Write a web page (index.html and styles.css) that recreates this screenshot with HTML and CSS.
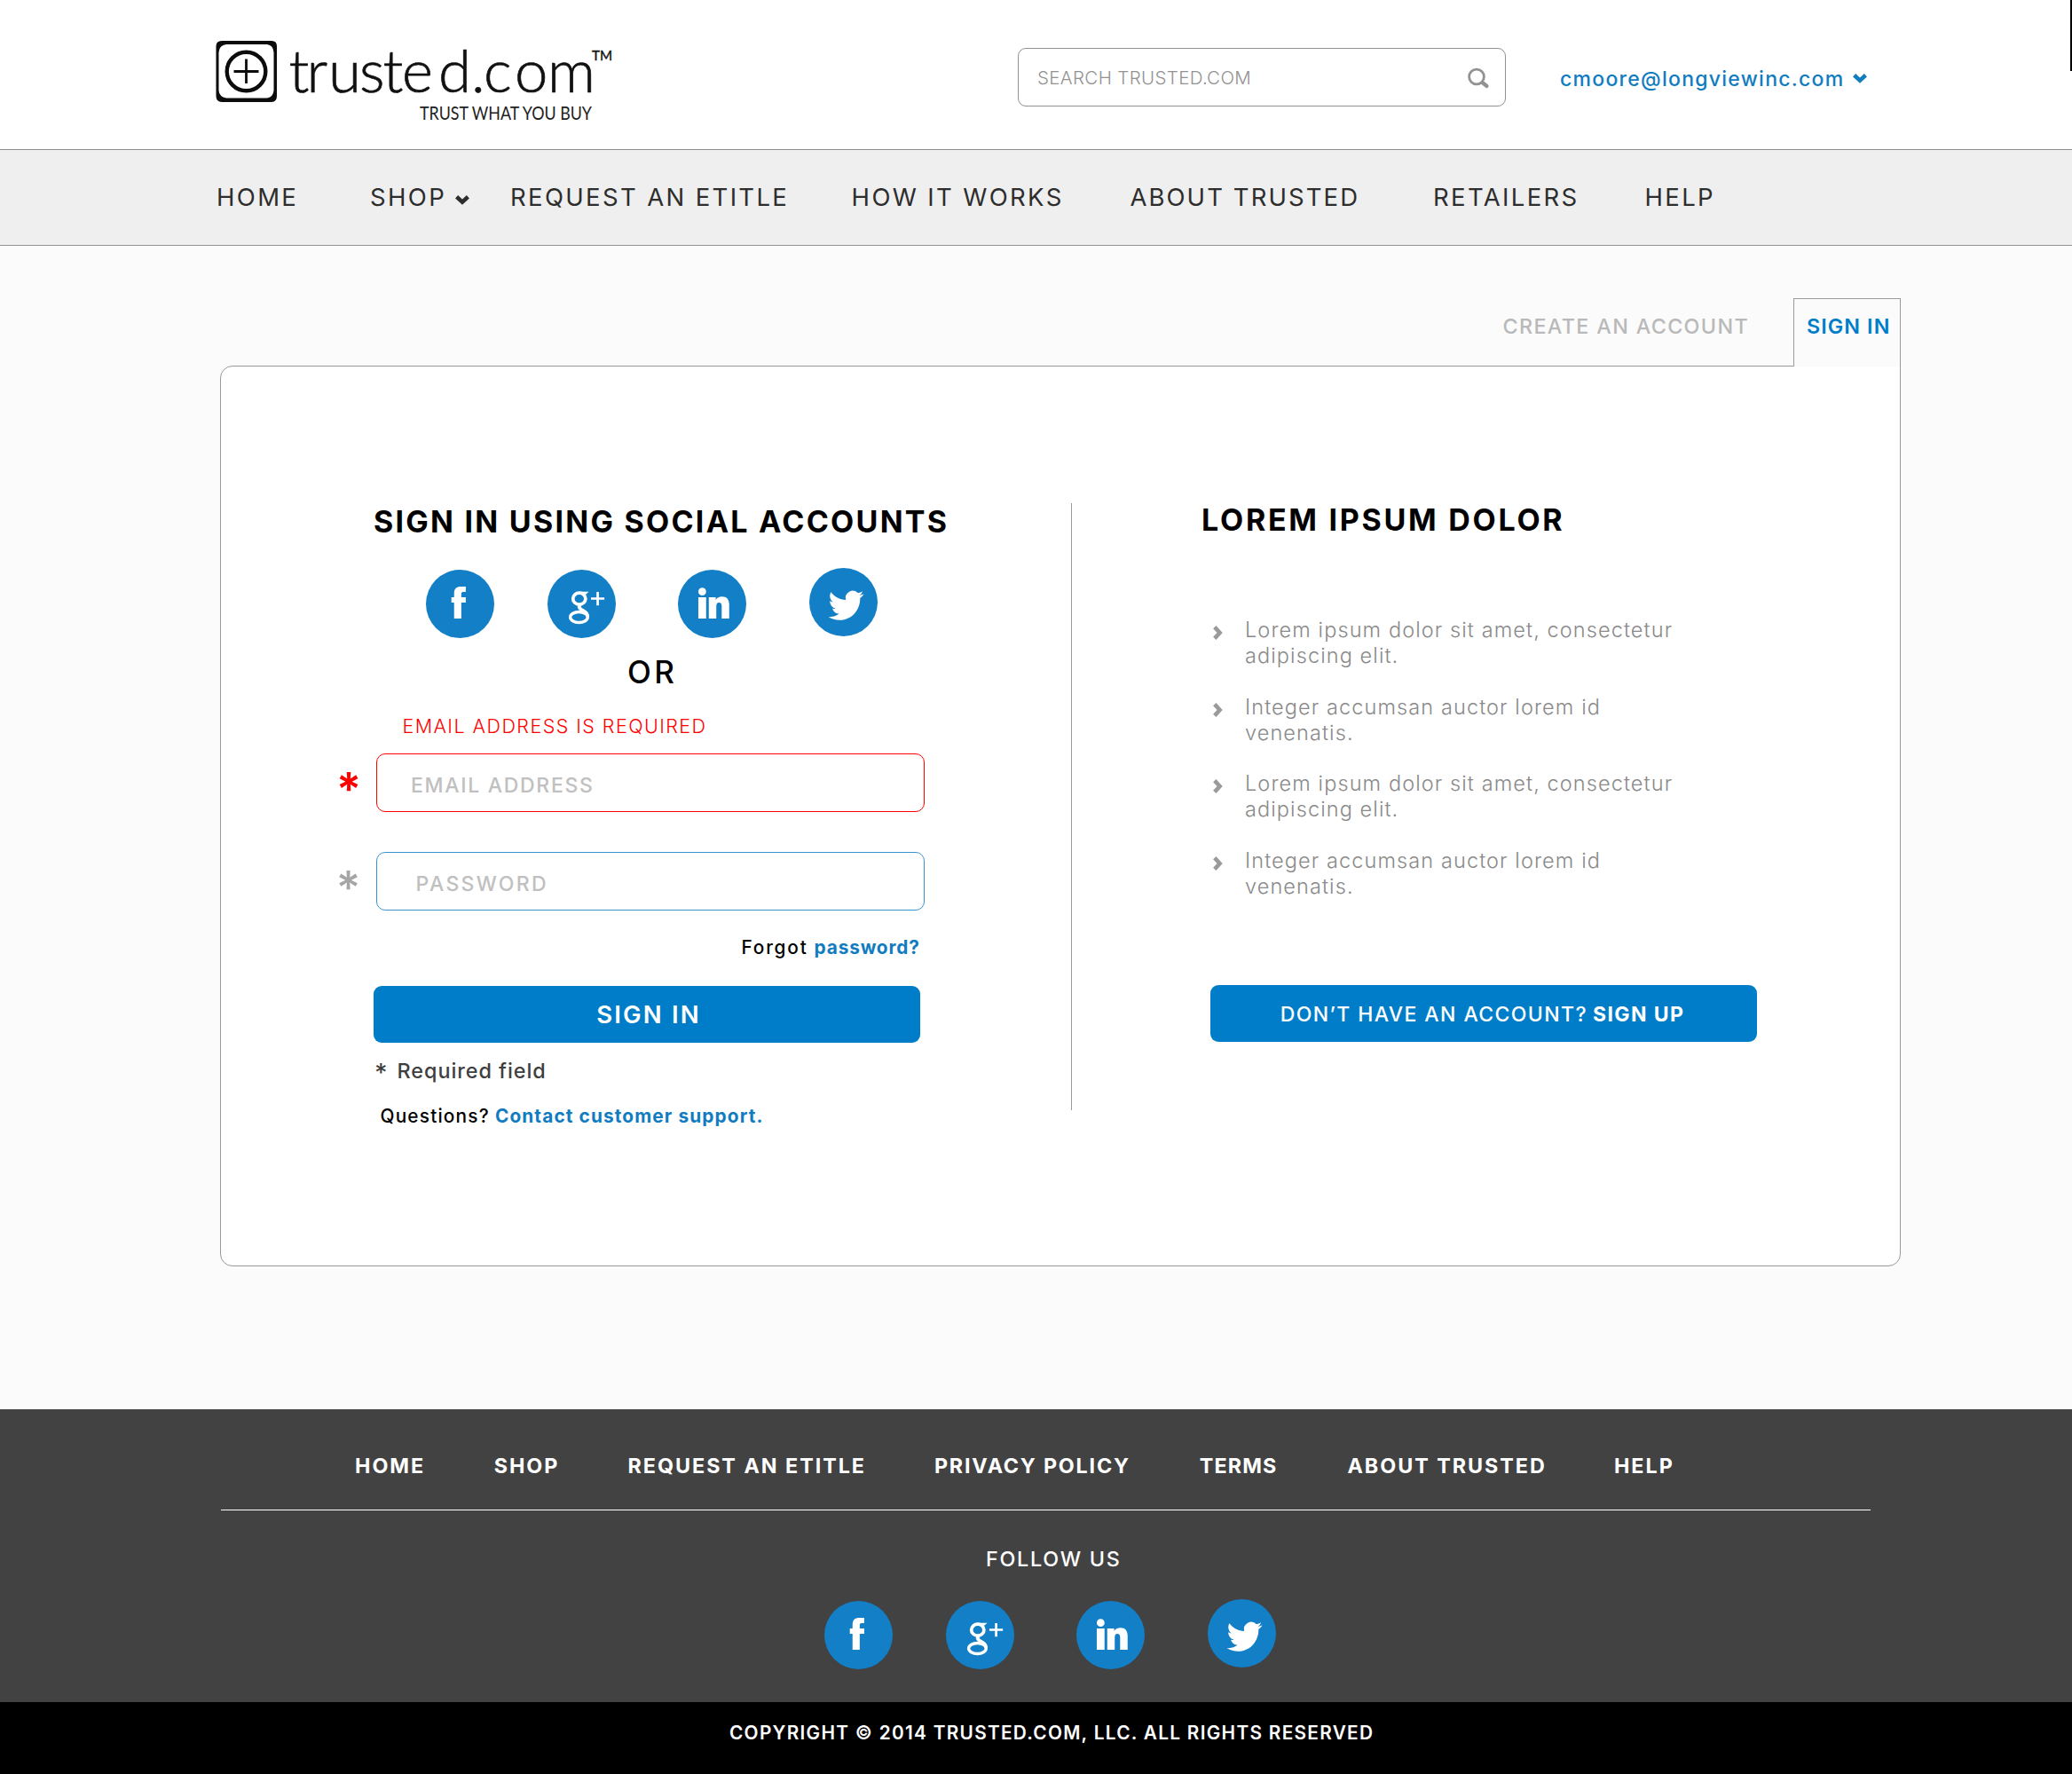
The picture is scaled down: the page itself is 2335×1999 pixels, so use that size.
FILE: index.html
```html
<!DOCTYPE html>
<html lang="en">
<head>
<meta charset="utf-8">
<title>Trusted.com – Sign in</title>
<link rel="stylesheet" href="styles.css">
</head>
<body>
<svg class="sprite" aria-hidden="true">
  <symbol id="facebook" viewBox="0 0 228 231" preserveAspectRatio="none">
    <path fill="#fff" d="M94 165V111H85V93H94V81C94 64 102 57 117 57H133V75H124C119 75 118 78 118 82V93H133V111H118V165Z"/>
  </symbol>
  <symbol id="google" viewBox="0 0 228 231" preserveAspectRatio="none">
    <g fill="none" stroke="#fff">
      <ellipse cx="106" cy="98" rx="21" ry="19.500" stroke-width="11"/>
      <path stroke-width="11" d="M111 118C98 126 110 133 121 139C130 144 134 151 134 160"/>
      <ellipse cx="105" cy="160.500" rx="29" ry="18" stroke-width="10"/>
      <path stroke-width="8" d="M145 97.500H190M167.500 75V121"/>
    </g>
    <path fill="#fff" d="M104 74H138L128 83H112Z"/>
  </symbol>
  <symbol id="linkedin" viewBox="0 0 228 231" preserveAspectRatio="none">
    <g fill="#fff">
      <circle cx="81" cy="74" r="13"/>
      <rect x="68" y="93" width="26" height="72"/>
      <path d="M103 93H126V102C130 95 138 91 147 91C163 91 171 101 171 118V165H146V124C146 115 143 111 137 111C131 111 128 115 128 124V165H103Z"/>
    </g>
  </symbol>
  <symbol id="twitter" viewBox="0 0 228 231" preserveAspectRatio="none">
    <path fill="#fff" transform="translate(64 65.500) scale(4.900 5.100)" d="M23.953 4.570a10 10 0 01-2.825.775 4.958 4.958 0 002.163-2.723c-.951.555-2.005.959-3.127 1.184a4.920 4.920 0 00-8.384 4.482C7.690 8.095 4.067 6.130 1.640 3.162a4.822 4.822 0 00-.666 2.475c0 1.710.870 3.213 2.188 4.096a4.904 4.904 0 01-2.228-.616v.060a4.923 4.923 0 003.946 4.827 4.996 4.996 0 01-2.212.085 4.936 4.936 0 004.604 3.417 9.867 9.867 0 01-6.102 2.105c-.390 0-.779-.023-1.170-.067a13.995 13.995 0 007.557 2.209c9.053 0 13.998-7.496 13.998-13.985 0-.210 0-.420-.015-.630A9.935 9.935 0 0024 4.590z"/>
  </symbol>
  <symbol id="chevron-down" viewBox="0 0 16 11">
    <path fill="none" stroke="currentColor" stroke-width="4.600" d="M1.600 1.800L8 7.600L14.400 1.800"/>
  </symbol>
  <symbol id="chevron-right" viewBox="0 0 11 16">
    <path fill="none" stroke="currentColor" stroke-width="4.600" d="M1.800 1.600L7.600 8L1.800 14.400"/>
  </symbol>
</svg>

<header class="header">
  <svg class="logo" viewBox="240 32 455 110">
    <path fill="#0c0c0c" fill-rule="evenodd" d="M250 46h56q6 0 6 6v56q0 7-6 7h-56q-6.500 0-6.500-7v-56q0-6 6.500-6zM255 50q-8 1-8.500 9v43q.500 7 8.500 8.500h46q7-1.500 7.500-8.500v-43q-.500-8-7.500-9z"/>
    <circle cx="277.500" cy="80.500" r="21.800" fill="none" stroke="#0c0c0c" stroke-width="4.400"/>
    <path stroke="#0c0c0c" stroke-width="2.800" d="M263.500 80.500H291.500M277.500 66.500V94"/>
    <text class="wordmark" y="104" x="325.500 345.500 370 405 431.500 453 494 531 545 580 617">trusted.com</text>
    <text class="trademark" x="667" y="68" textLength="23" lengthAdjust="spacingAndGlyphs">TM</text>
    <text class="tagline" x="473" y="134.500" textLength="194" lengthAdjust="spacingAndGlyphs">TRUST WHAT YOU BUY</text>
  </svg>
  <div class="search">
    <span>SEARCH TRUSTED.COM</span>
    <svg width="26" height="24" viewBox="0 0 26 24"><circle cx="11" cy="10.500" r="8.400" fill="none" stroke="#929292" stroke-width="2.800"/><path d="M17.500 17L22.500 21" stroke="#929292" stroke-width="4.200" stroke-linecap="round"/></svg>
  </div>
  <a class="account">cmoore@longviewinc.com<svg width="16" height="11"><use href="#chevron-down"/></svg></a>
  <span class="edge"></span>
</header>

<nav class="nav">
  <a>HOME</a>
  <a>SHOP<svg width="16" height="11"><use href="#chevron-down"/></svg></a>
  <a>REQUEST AN ETITLE</a>
  <a>HOW IT WORKS</a>
  <a class="about">ABOUT TRUSTED</a>
  <a>RETAILERS</a>
  <a>HELP</a>
</nav>

<main class="main">
  <div class="tabs">
    <a class="tab">CREATE AN ACCOUNT</a>
    <a class="tab tab-active">SIGN IN</a>
  </div>
  <section class="panel">
    <form class="signin">
      <h2 class="signin-title">SIGN IN USING SOCIAL ACCOUNTS</h2>
      <div class="social">
        <a><svg><use href="#facebook"/></svg></a>
        <a><svg><use href="#google"/></svg></a>
        <a><svg><use href="#linkedin"/></svg></a>
        <a><svg><use href="#twitter"/></svg></a>
      </div>
      <p class="or">OR</p>
      <p class="error">EMAIL ADDRESS IS REQUIRED</p>
      <div class="field field-error"><span class="star">*</span><div class="input">EMAIL ADDRESS</div></div>
      <div class="field field-password"><span class="star">*</span><div class="input">PASSWORD</div></div>
      <p class="forgot"><span>Forgot</span><a>password?</a></p>
      <a class="button button-signin">SIGN IN</a>
      <p class="required"><span class="star">*</span>Required field</p>
      <p class="questions"><span>Questions?</span><a>Contact customer support.</a></p>
    </form>
    <div class="divider"></div>
    <div class="signup">
      <h2 class="signup-title">LOREM IPSUM DOLOR</h2>
      <ul class="benefits">
        <li><svg width="11" height="16"><use href="#chevron-right"/></svg><span>Lorem ipsum dolor sit amet, consectetur adipiscing elit.</span></li>
        <li><svg width="11" height="16"><use href="#chevron-right"/></svg><span>Integer accumsan auctor lorem id venenatis.</span></li>
        <li><svg width="11" height="16"><use href="#chevron-right"/></svg><span>Lorem ipsum dolor sit amet, consectetur adipiscing elit.</span></li>
        <li><svg width="11" height="16"><use href="#chevron-right"/></svg><span>Integer accumsan auctor lorem id venenatis.</span></li>
      </ul>
      <a class="button button-signup"><span>DON’T HAVE AN ACCOUNT?</span><b>SIGN UP</b></a>
    </div>
  </section>
</main>

<footer class="footer">
  <nav class="footer-nav">
    <a>HOME</a>
    <a>SHOP</a>
    <a>REQUEST AN ETITLE</a>
    <a class="privacy">PRIVACY POLICY</a>
    <a class="terms">TERMS</a>
    <a>ABOUT TRUSTED</a>
    <a>HELP</a>
  </nav>
  <div class="rule"></div>
  <p class="follow">FOLLOW US</p>
  <div class="social">
    <a><svg><use href="#facebook"/></svg></a>
    <a><svg><use href="#google"/></svg></a>
    <a><svg><use href="#linkedin"/></svg></a>
    <a><svg><use href="#twitter"/></svg></a>
  </div>
</footer>
<p class="copyright">COPYRIGHT © 2014 TRUSTED.COM, LLC. ALL RIGHTS RESERVED</p>
</body>
</html>
```
FILE: styles.css
```css
* { box-sizing: border-box; }
body { margin: 0; background: #fbfbfb; font-family: Inter, "Liberation Sans", sans-serif; color: #000; white-space: nowrap; }
h2, p, ul { margin: 0; padding: 0; }
svg { display: block; flex: none; }
.sprite { position: absolute; width: 0; height: 0; }

/* Header */
.header { position: relative; display: flex; align-items: center; height: 169px; padding: 6px 0 0 240px; background: #fff; border-bottom: 1px solid #8f8f8f; }
.logo { width: 455px; height: 110px; }
.wordmark { font: 300 67px Lato, sans-serif; fill: #111; stroke: #111; stroke-width: .7px; }
.trademark { font: 400 15.500px Lato, sans-serif; fill: #111; stroke: #111; stroke-width: .4px; }
.tagline { font: 400 22px Lato, sans-serif; fill: #222; }
.search { display: flex; align-items: center; justify-content: space-between; width: 550px; height: 66px; margin-left: 452px; padding: 1px 17px 0 21px; border: 1px solid #929292; border-radius: 9px; color: #929292; font-size: 20.500px; font-weight: 300; letter-spacing: .350px; }
.account { display: flex; align-items: center; gap: 10px; margin: 3px 0 0 61px; color: #127cc1; font-size: 23px; font-weight: 500; letter-spacing: 1.270px; }
.edge { position: absolute; top: 0; right: 0; width: 2px; height: 80px; background: #000; }

/* Main navigation */
.nav { display: grid; grid-template-columns: 173px 158px 384.600px 313.800px 341.600px 238.500px auto; height: 108px; padding-left: 244px; background: #efefef; border-bottom: 1px solid #929292; color: #2d2d2d; font-size: 27.500px; line-height: 107px; letter-spacing: 2.350px; }
.nav a { display: flex; align-items: center; gap: 10px; }
.nav .about { letter-spacing: 2.080px; }
.nav svg { margin-top: 5px; }

/* Tabs and panel */
.main { height: 1311px; padding: 59px 0 0 248px; }
.tabs { position: relative; display: flex; justify-content: flex-end; width: 1894px; height: 76px; font-size: 23.300px; line-height: 62px; }
.tab { padding-top: 1px; color: #b9b9b9; font-weight: 500; letter-spacing: 1.360px; }
.tab-active { width: 121px; height: 77px; margin-left: 50px; padding: 0 0 0 14px; background: #fbfbfb; border: 1px solid #999; border-bottom: 0; color: #007dc9; font-weight: 600; letter-spacing: 1.100px; }
.panel { display: flex; align-items: flex-start; width: 1894px; height: 1015px; padding: 154px 0 0 134px; background: #fff; border: 1px solid #999; border-radius: 14px 0 14px 14px; }
.divider { width: 1px; height: 684px; margin-left: 164px; background: #999; }

/* Sign-in form */
.signin { width: 660px; }
.signin-title { padding-left: 38px; font-size: 34px; line-height: 41px; letter-spacing: 2.250px; }
.social { display: flex; align-items: flex-end; gap: 60px; height: 79px; }
.social a { width: 77px; height: 77px; border-radius: 50%; background: #127fc6; }
.social a:nth-child(3) { margin-left: 10px; }
.social a:nth-child(4) { align-self: flex-start; margin-left: 11px; }
.social svg { width: 77px; height: 77px; }
.signin .social { margin: 32px 0 0 97px; }
.or { margin-top: 18px; padding-left: 324px; font-size: 35px; font-weight: 500; line-height: 40px; letter-spacing: 3.500px; }
.error { margin-top: 28px; padding-left: 70.400px; color: #f00; font-size: 21.500px; font-weight: 350; line-height: 26px; letter-spacing: 1.450px; }
.field { display: flex; height: 66px; }
.field-error { margin-top: 18px; }
.field-password { margin-top: 45px; }
.field .star { width: 45px; margin-left: -4px; padding-top: 15px; font-size: 52px; font-weight: 600; line-height: 52px; }
.field-error .star { color: #f00; }
.field-password .star { color: #a5a5a5; font-weight: 500; }
.input { width: 618px; padding: 4px 0 0 38px; border: 1px solid #3a93cf; border-radius: 10px; color: #c0c0c0; font-size: 23px; font-weight: 500; line-height: 62px; letter-spacing: 1.690px; }
.field-error .input { border-color: #f00; }
.field-password .input { padding-left: 43.600px; letter-spacing: 2.300px; }
.forgot { display: flex; gap: 7px; margin-top: 28px; padding-left: 452.500px; font-size: 20.800px; font-weight: 500; line-height: 28px; letter-spacing: 1.800px; }
.forgot a, .questions a { color: #127cc1; font-weight: 700; letter-spacing: .850px; }
.button { display: flex; align-items: center; justify-content: center; width: 616px; height: 64px; border-radius: 9px; background: #007dc9; color: #fff; }
.button-signin { margin: 29px 0 0 38px; padding: 0 0 1px 4px; font-size: 27.500px; font-weight: 600; letter-spacing: 2.160px; }
.required { display: flex; margin-top: 17px; padding-left: 39px; color: #3f3f3f; font-size: 23.400px; font-weight: 500; line-height: 30px; letter-spacing: .95px; }
.required .star { width: 25.500px; padding-top: 2px; font-size: 28px; letter-spacing: 0; }
.questions { display: flex; gap: 6px; margin-top: 20px; padding-left: 45.500px; font-size: 20.800px; font-weight: 500; line-height: 28px; letter-spacing: 1.190px; }
.questions a { letter-spacing: 1.130px; }

/* Sign-up column */
.signup { margin-left: 146px; }
.signup-title { font-size: 34px; line-height: 38px; letter-spacing: 2.720px; }
.benefits { display: flex; flex-direction: column; gap: 28.800px; margin-top: 91.400px; padding-left: 13px; list-style: none; color: #8a8a8a; font-size: 23.500px; font-weight: 350; line-height: 28.850px; letter-spacing: 1.100px; }
.benefits li { display: flex; gap: 25px; }
.benefits svg { margin-top: 9px; color: #9a9a9a; }
.benefits span { width: 500px; white-space: normal; }
.button-signup { gap: 6px; margin: 96.400px 0 0 9.500px; padding: 3px 2px 0 0; font-size: 23px; font-weight: 500; letter-spacing: 1.400px; }

/* Footer */
.footer { height: 330px; padding: 50px 0 0 249px; background: #424242; color: #fff; }
.footer-nav { display: grid; grid-template-columns: 156.700px 150.800px 345.500px 298.800px 166.700px 300.500px auto; padding-left: 151px; font-size: 23.300px; font-weight: 700; line-height: 27px; letter-spacing: 1.980px; }
.footer-nav .privacy { letter-spacing: 1.790px; }
.footer-nav .terms { letter-spacing: 1.120px; }
.rule { width: 1859px; height: 1px; margin-top: 36px; background: #fff; }
.follow { margin-top: 41px; padding-left: 862px; font-size: 23.300px; font-weight: 500; line-height: 28px; letter-spacing: 1.750px; }
.footer .social { margin: 31px 0 0 680px; }
.copyright { height: 81px; padding-left: 822px; background: #000; color: #fff; font-size: 20.800px; font-weight: 600; line-height: 70px; letter-spacing: 1.290px; }
```
